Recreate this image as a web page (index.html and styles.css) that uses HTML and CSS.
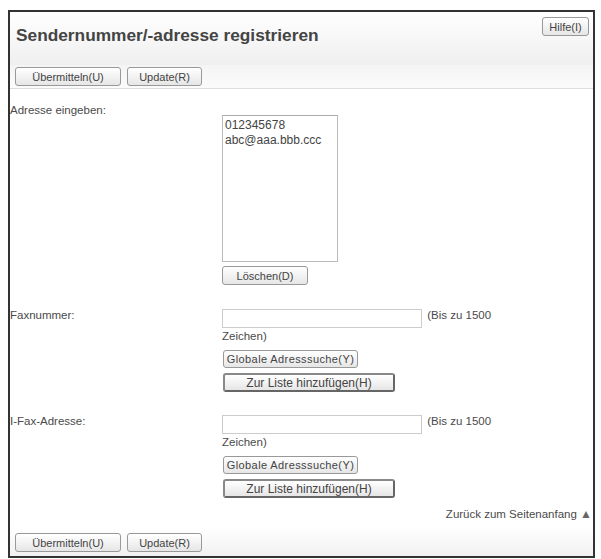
FILE: index.html
```html
<!DOCTYPE html>
<html lang="de">

<head>
    <meta charset="utf8">
    <title>Sendernummer/-adresse registrieren</title>
    <link rel="stylesheet" href="styles.css">
</head>

<body>
    <div class="frame">
        <header class="page-head">
            <h1>Sendernummer/-adresse registrieren</h1>
            <button class="btn help">Hilfe(I)</button>
        </header>
        <div class="toolbar top">
            <button class="btn wide">Übermitteln(U)</button>
            <button class="btn">Update(R)</button>
        </div>

        <div class="form">
            <div class="label">Adresse eingeben:</div>
            <div class="field list-field">
                <div class="listbox">
                    <div>012345678</div>
                    <div>abc@aaa.bbb.ccc</div>
                </div>
                <button class="btn delete">Löschen(D)</button>
            </div>

            <div class="label">Faxnummer:</div>
            <div class="field">
                <input type="text" class="text-input"> (Bis zu 1500 Zeichen)
                <button class="btn search">Globale Adresssuche(Y)</button>
                <button class="btn add">Zur Liste hinzufügen(H)</button>
            </div>

            <div class="label">I-Fax-Adresse:</div>
            <div class="field">
                <input type="text" class="text-input"> (Bis zu 1500 Zeichen)
                <button class="btn search">Globale Adresssuche(Y)</button>
                <button class="btn add">Zur Liste hinzufügen(H)</button>
            </div>
        </div>

        <div class="back-top">Zurück zum Seitenanfang <span class="arrow">▲</span></div>

        <div class="toolbar bottom">
            <button class="btn wide">Übermitteln(U)</button>
            <button class="btn">Update(R)</button>
        </div>
    </div>
</body>

</html>
```

FILE: styles.css
```css
* {
    box-sizing: border-box;
    margin: 0;
    padding: 0;
}

body {
    background-color: #fff;
    font-family: "Liberation Sans", Arial, sans-serif;
    font-size: 11.5px;
    color: #4a4a4a;
}

.frame {
    margin: 10px 6px 0 8px;
    height: 548px;
    border: 2px solid #333;
    display: flex;
    flex-direction: column;
}

.page-head {
    display: flex;
    justify-content: space-between;
    align-items: flex-start;
    height: 53px;
    padding: 5px 4px 0 6px;
    background: linear-gradient(#fff, #efefef);
}

.page-head h1 {
    font-size: 17.3px;
    font-weight: bold;
    color: #444;
    margin-top: 8px;
}

.btn {
    font-family: "Liberation Sans", Arial, sans-serif;
    font-size: 11px;
    color: #444;
    height: 19px;
    padding: 0 8px;
    background: linear-gradient(#fff, #e6e6e6);
    border: 1px solid #999;
    border-radius: 3px;
    cursor: pointer;
}

.btn.help {
    width: 47px;
    height: 19px;
    padding: 0;
}

.toolbar {
    display: flex;
    gap: 6px;
    padding: 2px 0 0 5px;
}

.toolbar .btn {
    width: 75px;
}

.toolbar .btn.wide {
    width: 106px;
}

.toolbar.top {
    height: 24px;
    background: linear-gradient(#f4f4f4, #fbfbfb);
    border-bottom: 1px solid #ddd;
}

.toolbar.bottom {
    margin-top: auto;
    height: 29px;
    padding-top: 6px;
    background: linear-gradient(#fff, #f1f1f1);
}

.form {
    display: grid;
    grid-template-columns: 212px 290px;
    row-gap: 21px;
    padding-top: 13px;
}

.label {
    line-height: 15px;
    padding-top: 1px;
}

.field {
    line-height: 17px;
}

.list-field {
    padding: 13px 0 1px;
}

.listbox {
    width: 116px;
    height: 147px;
    border: 1px solid #bbb;
    border-top-color: #aaa;
    padding: 2px 2px;
    font-size: 12px;
    line-height: 15px;
    color: #444;
}

.btn.delete {
    display: block;
    width: 86px;
    margin-top: 4px;
}

.text-input {
    width: 200px;
    height: 19px;
    border: 1px solid #ccc;
    vertical-align: top;
    margin: 2px 2px 0 0;
}

.btn.search {
    display: block;
    width: 135px;
    height: 18px;
    margin: 5px 0 0 1px;
    padding: 0;
    letter-spacing: 0.4px;
}

.btn.add {
    display: block;
    width: 172px;
    height: 19px;
    margin: 5px 0 0 1px;
    border: 2px solid #666;
    border-top-color: #888;
    border-left-color: #888;
    font-size: 12px;
}

.back-top {
    text-align: right;
    padding: 9px 1px 0 0;
    line-height: 15px;
    color: #4a4a4a;
}

.back-top .arrow {
    font-size: 12px;
    color: #666;
}
```
